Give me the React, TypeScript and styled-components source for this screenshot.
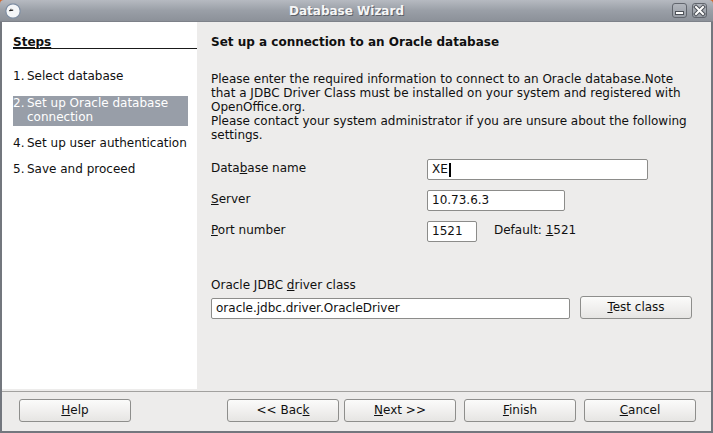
import React from 'react';
import styled, { createGlobalStyle } from 'styled-components';

const Global = createGlobalStyle`
  html, body { margin: 0; padding: 0; background: #d0652c; }
  body {
    font-family: "DejaVu Sans", Verdana, sans-serif;
    font-size: 12px;
    color: #101010;
  }
  * { box-sizing: border-box; }
`;

const Window = styled.div`
  width: 713px;
  height: 433px;
  display: flex;
  flex-direction: column;
  border-radius: 4px 4px 0 0;
  overflow: hidden;
`;

const TitleBar = styled.div`
  height: 22px;
  flex: none;
  display: flex;
  align-items: center;
  padding: 0 6px 0 5px;
  background: linear-gradient(#b6bac1, #9a9fa7 50%, #8c9199);
  border-bottom: 1px solid #7d8189;
`;

const TitleText = styled.div`
  flex: 1;
  text-align: center;
  font-weight: bold;
  font-size: 12px;
  color: #f6f6f6;
  text-shadow: 1px 1px 0 #5c6068;
`;

const TitleButtons = styled.div`
  display: flex;
  gap: 5px;
`;

const WinButton = styled.div`
  width: 15px;
  height: 15px;
  border: 1px solid #62666e;
  border-radius: 3px;
  background: linear-gradient(#b2b6bd, #989da5);
  display: flex;
  align-items: center;
  justify-content: center;
`;

const Frame = styled.div`
  flex: 1;
  display: flex;
  flex-direction: column;
  border: 2px solid #73777e;
  border-top: 0;
  background: #edeceb;
`;

const Main = styled.div`
  height: 367px;
  flex: none;
  display: flex;
`;

const Sidebar = styled.div`
  width: 195px;
  flex: none;
  background: #ffffff;
  padding-top: 14px;
`;

const StepsHeader = styled.div`
  margin-left: 11px;
  font-weight: bold;
  line-height: 12px;
  height: 13px;
  border-bottom: 1px solid #1a1a1a;
  text-decoration: underline;
`;

const StepList = styled.div`
  display: flex;
  flex-direction: column;
  margin-top: 20px;
`;

const StepItem = styled.div<{ $active?: boolean; $gap: number }>`
  display: grid;
  grid-template-columns: 14px 1fr;
  width: 175px;
  margin-left: 11px;
  margin-top: ${(p) => p.$gap}px;
  line-height: 14px;
  padding-bottom: ${(p) => (p.$active ? 2 : 0)}px;
  background: ${(p) => (p.$active ? '#989ea8' : 'transparent')};
  color: ${(p) => (p.$active ? '#ffffff' : '#101010')};
`;

const Content = styled.div`
  flex: 1;
  padding: 14px 0 0 14px;
  display: flex;
  flex-direction: column;
`;

const Heading = styled.div`
  font-weight: bold;
  line-height: 12px;
  height: 12px;
`;

const Paragraph = styled.div`
  margin-top: 24px;
  width: 480px;
  line-height: 14px;
`;

const Form = styled.div`
  margin-top: 17px;
  display: flex;
  flex-direction: column;
  gap: 10px;
`;

const FormRow = styled.div`
  display: flex;
  align-items: flex-start;
  height: 21px;
`;

const Label = styled.div`
  width: 216px;
  flex: none;
  padding-top: 2px;
  line-height: 14px;
`;

const Field = styled.div<{ $width: number }>`
  width: ${(p) => p.$width}px;
  height: 21px;
  flex: none;
  border: 1px solid #8c8c8a;
  border-radius: 2px;
  background: #ffffff;
  padding: 0 4px;
  line-height: 19px;
  white-space: nowrap;
  display: flex;
  align-items: center;
`;

const Caret = styled.span`
  display: inline-block;
  width: 2px;
  height: 14px;
  background: #000;
  margin-left: 1px;
`;

const Hint = styled.div`
  margin-left: 17px;
  padding-top: 2px;
  line-height: 14px;
`;

const DriverLabel = styled.div`
  margin-top: 36px;
  line-height: 14px;
`;

const DriverRow = styled.div`
  margin-top: 4px;
  display: flex;
  align-items: flex-end;
  gap: 10px;
`;

const Button = styled.div`
  width: 112px;
  height: 23px;
  flex: none;
  border: 1px solid #8e8e8c;
  border-radius: 3px;
  background: linear-gradient(#fbfbfa, #f1f0ef 50%, #e6e5e3);
  text-align: center;
  line-height: 20px;
  color: #101010;
`;

const Separator = styled.div`
  height: 1px;
  flex: none;
  margin-top: 2px;
  background: #a2a19f;
`;

const Footer = styled.div`
  flex: 1;
  display: flex;
  align-items: flex-start;
  padding: 7px 15px 0 17px;
`;

const Spacer = styled.div`
  flex: 1;
`;

const ButtonGroup = styled.div<{ $gap: number; $offset?: number }>`
  display: flex;
  gap: ${(p) => p.$gap}px;
  margin-left: ${(p) => p.$offset ?? 0}px;
`;

const U = styled.span`
  text-decoration: underline;
`;

const AppIcon = () => (
  <svg width="16" height="16" viewBox="0 0 16 16">
    <circle cx="8" cy="8" r="7.2" fill="#f4f6f8" stroke="#7e8ea3" strokeWidth="1.2" />
    <path d="M4.2 7.6 L8.2 7.2" stroke="#222" strokeWidth="1.2" />
    <path d="M5 6.4 L6.6 6.2" stroke="#444" strokeWidth="0.8" />
  </svg>
);

const MinIcon = () => (
  <svg width="13" height="13" viewBox="0 0 13 13">
    <rect x="2.5" y="7.5" width="8" height="3" fill="#fff" stroke="#4d5158" strokeWidth="1" />
  </svg>
);

const CloseIcon = () => (
  <svg width="13" height="13" viewBox="0 0 13 13">
    <path d="M3 3 L10 10 M10 3 L3 10" stroke="#4d5158" strokeWidth="4" strokeLinecap="square" />
    <path d="M3 3 L10 10 M10 3 L3 10" stroke="#fff" strokeWidth="2" strokeLinecap="square" />
  </svg>
);

const steps = [
  { n: '1.', label: 'Select database', gap: 0 },
  { n: '2.', label: 'Set up Oracle database connection', gap: 13, active: true },
  { n: '4.', label: 'Set up user authentication', gap: 10 },
  { n: '5.', label: 'Save and proceed', gap: 12 },
];

export default function App() {
  return (
    <>
      <Global />
      <Window>
        <TitleBar>
          <AppIcon />
          <TitleText>Database Wizard</TitleText>
          <TitleButtons>
            <WinButton><MinIcon /></WinButton>
            <WinButton><CloseIcon /></WinButton>
          </TitleButtons>
        </TitleBar>
        <Frame>
          <Main>
            <Sidebar>
              <StepsHeader>Steps</StepsHeader>
              <StepList>
                {steps.map((s) => (
                  <StepItem key={s.n} $gap={s.gap} $active={s.active}>
                    <span>{s.n}</span>
                    <span>{s.label}</span>
                  </StepItem>
                ))}
              </StepList>
            </Sidebar>
            <Content>
              <Heading>Set up a connection to an Oracle database</Heading>
              <Paragraph>
                Please enter the required information to connect to an Oracle database.Note that a JDBC Driver Class must be installed on your system and registered with OpenOffice.org.
                <br />
                Please contact your system administrator if you are unsure about the following settings.
              </Paragraph>
              <Form>
                <FormRow>
                  <Label>Data<U>b</U>ase name</Label>
                  <Field $width={221}>XE<Caret /></Field>
                </FormRow>
                <FormRow>
                  <Label><U>S</U>erver</Label>
                  <Field $width={138}>10.73.6.3</Field>
                </FormRow>
                <FormRow>
                  <Label><U>P</U>ort number</Label>
                  <Field $width={50}>1521</Field>
                  <Hint>Default: <U>1</U>521</Hint>
                </FormRow>
              </Form>
              <DriverLabel>Oracle JDBC <U>d</U>river class</DriverLabel>
              <DriverRow>
                <Field $width={359}>oracle.jdbc.driver.OracleDriver</Field>
                <Button><U>T</U>est class</Button>
              </DriverRow>
            </Content>
          </Main>
          <Separator />
          <Footer>
            <Button><U>H</U>elp</Button>
            <Spacer />
            <ButtonGroup $gap={5}>
              <Button>&lt;&lt; Bac<U>k</U></Button>
              <Button><U>N</U>ext &gt;&gt;</Button>
            </ButtonGroup>
            <ButtonGroup $gap={8} $offset={8}>
              <Button><U>F</U>inish</Button>
              <Button><U>C</U>ancel</Button>
            </ButtonGroup>
          </Footer>
        </Frame>
      </Window>
    </>
  );
}
